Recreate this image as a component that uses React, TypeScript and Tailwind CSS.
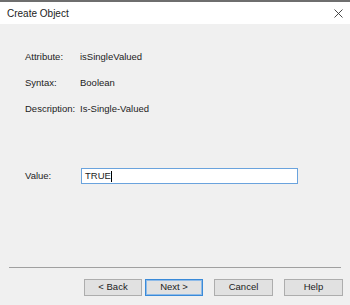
import React from "react";

const rows = [
  { label: "Attribute:", value: "isSingleValued" },
  { label: "Syntax:", value: "Boolean" },
  { label: "Description:", value: "Is-Single-Valued" },
];

function WizButton({
  label,
  w,
  focused,
  className = "",
}: {
  label: string;
  w: string;
  focused?: boolean;
  className?: string;
}) {
  return (
    <button
      className={`${w} h-[17px] flex items-center justify-center text-[9.5px] text-[#1c1c1c] bg-[#e1e1e1] border ${
        focused ? "border-[#3a8ad8] ring-1 ring-inset ring-[#8fbbe8]" : "border-[#adadad]"
      } ${className}`}
    >
      {label}
    </button>
  );
}

export default function App() {
  return (
    <div
      className="w-[350px] h-[305px] bg-[#f0f0f0] flex flex-col overflow-hidden text-[#1c1c1c]"
      style={{ fontFamily: '"Liberation Sans", Arial, sans-serif' }}
    >
      {/* strip of the window behind */}
      <div className="h-[2px] bg-[#6e6e6e]" />

      {/* title bar */}
      <div className="h-[22px] bg-white flex items-center justify-between pl-[7px] pr-[7px]">
        <span className="text-[10px]">Create Object</span>
        <svg width="9" height="9" viewBox="0 0 9 9">
          <path d="M0.5 0.5 L8.5 8.5 M8.5 0.5 L0.5 8.5" stroke="#333" strokeWidth="0.9" />
        </svg>
      </div>

      {/* attribute info */}
      <div className="pt-[26px] pl-[25px] flex flex-col gap-[12px]">
        {rows.map((r) => (
          <div key={r.label} className="h-[14px] flex items-center text-[9.5px]">
            <span className="w-[55px]">{r.label}</span>
            <span>{r.value}</span>
          </div>
        ))}
      </div>

      {/* value */}
      <div className="mt-[52px] pl-[25px] flex items-center text-[9.5px]">
        <span className="w-[56px]">Value:</span>
        <div className="w-[217px] h-[16px] bg-white border border-[#6aa3dd] flex items-center pl-[3px]">
          <span>TRUE</span>
          <span className="w-px h-[11px] bg-black" />
        </div>
      </div>

      {/* separator */}
      <div className="mt-[83px] mx-[9px] h-px bg-[#a0a0a0]" />

      {/* buttons */}
      <div className="mt-[11px] flex justify-end pr-[7px]">
        <WizButton label="< Back" w="w-[58px]" />
        <WizButton label="Next >" w="w-[58px]" focused className="ml-[3px]" />
        <WizButton label="Cancel" w="w-[59px]" className="ml-[11px]" />
        <WizButton label="Help" w="w-[59px]" className="ml-[11px]" />
      </div>
    </div>
  );
}
